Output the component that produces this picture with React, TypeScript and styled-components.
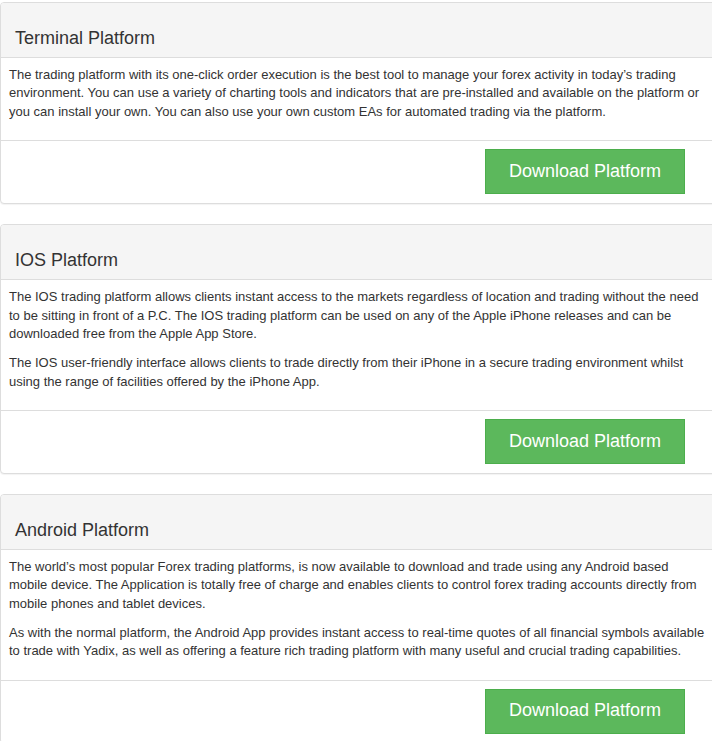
import styled, { createGlobalStyle } from "styled-components";

const GlobalStyle = createGlobalStyle`
   html, body {
      margin: 0;
      padding: 0;
      background: #fff;
   }
   body {
      font-family: "Liberation Sans", Arial, Helvetica, sans-serif;
      font-size: 13px;
      line-height: 1.42857;
      color: #333;
   }
`

const Page = styled.div`
   width: 712px;
   overflow: hidden;
   padding-top: 2px;
`

const Panel = styled.div`
   width: 720px;
   box-sizing: border-box;
   margin-bottom: 20px;
   background: #fff;
   border: 1px solid #ddd;
   border-radius: 4px;
   box-shadow: 0 1px 1px rgba(0, 0, 0, 0.05);
`

const Heading = styled.div`
   padding: 26px 15px 8px 14px;
   background: #f5f5f5;
   border-bottom: 1px solid #ddd;
   border-radius: 3px 3px 0 0;
`

const Title = styled.h3`
   margin: 0;
   font-size: 18px;
   font-weight: 500;
   line-height: 1.1;
   color: #333;
`

const Body = styled.div`
   padding: 8px 13px 9px 8px;

   p {
      margin: 0 0 10px;
   }
`

const Footer = styled.div`
   display: flex;
   justify-content: flex-end;
   padding: 8px 34px 9px 15px;
   border-top: 1px solid #ddd;
`

const DownloadButton = styled.a`
   display: flex;
   align-items: center;
   justify-content: center;
   box-sizing: border-box;
   width: 200px;
   height: 45px;
   font-size: 18px;
   color: #fff;
   text-decoration: none;
   background: #5cb85c;
   border: 1px solid #4cae4c;
   border-radius: 0;
   cursor: pointer;
`

interface IPlatform {
   title: string
   paragraphs: string[]
}

const platforms: IPlatform[] = [
   {
      title: 'Terminal Platform',
      paragraphs: [
         'The trading platform with its one-click order execution is the best tool to manage your forex activity in today\u2019s trading environment. You can use a variety of charting tools and indicators that are pre-installed and available on the platform or you can install your own. You can also use your own custom EAs for automated trading via the platform.',
      ]
   },
   {
      title: 'IOS Platform',
      paragraphs: [
         'The IOS trading platform allows clients instant access to the markets regardless of location and trading without the need to be sitting in front of a P.C. The IOS trading platform can be used on any of the Apple iPhone releases and can be downloaded free from the Apple App Store.',
         'The IOS user-friendly interface allows clients to trade directly from their iPhone in a secure trading environment whilst using the range of facilities offered by the iPhone App.',
      ]
   },
   {
      title: 'Android Platform',
      paragraphs: [
         'The world\u2019s most popular Forex trading platforms, is now available to download and trade using any Android based mobile device. The Application is totally free of charge and enables clients to control forex trading accounts directly from mobile phones and tablet devices.',
         'As with the normal platform, the Android App provides instant access to real-time quotes of all financial symbols available to trade with Yadix, as well as offering a feature rich trading platform with many useful and crucial trading capabilities.',
      ]
   },
];

export default function App() {
   return (
      <>
         <GlobalStyle />
         <Page>
            {platforms.map((platform, index) => (
               <Panel key={index}>
                  <Heading>
                     <Title>{platform.title}</Title>
                  </Heading>
                  <Body>
                     {platform.paragraphs.map((text, i) => (
                        <p key={i}>{text}</p>
                     ))}
                  </Body>
                  <Footer>
                     <DownloadButton>Download Platform</DownloadButton>
                  </Footer>
               </Panel>
            ))}
         </Page>
      </>
   )
}
